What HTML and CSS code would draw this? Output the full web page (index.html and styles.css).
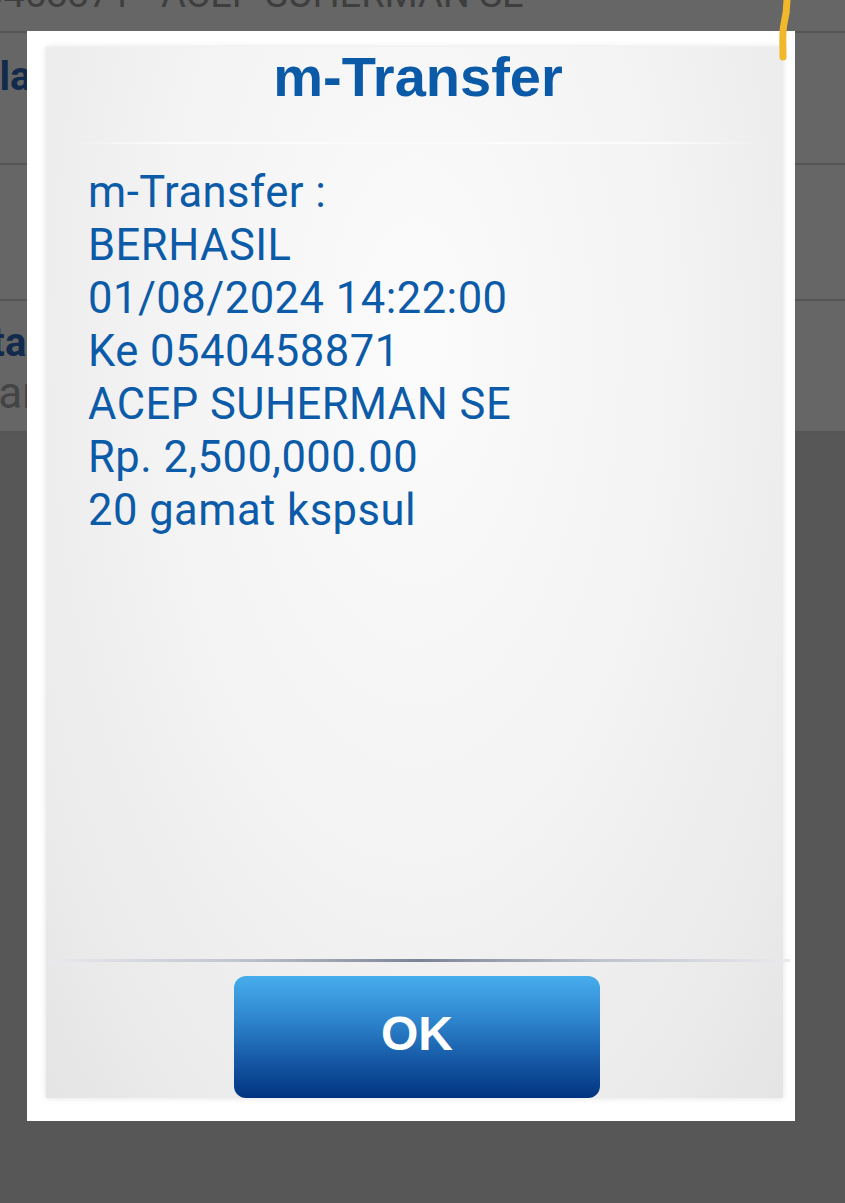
FILE: index.html
```html
<!DOCTYPE html>
<html lang="en">
<head>
    <meta charset="UTF-8">
    <meta name="viewport" content="width=device-width, initial-scale=1.0">
    <title>m-Transfer</title>
    <link rel="stylesheet" href="styles.css">
</head>
<body>

    <main class="screen">
        <!-- Halaman di belakang dialog -->
        <section class="list">
            <div class="row row-top"><span class="muted">0540458871 - ACEP SUHERMAN SE</span></div>
            <div class="row row-name"><span class="label">Jumlah</span></div>
            <div class="row row-empty"></div>
            <div class="row row-note">
                <span class="label">Berita:</span>
                <span class="muted small">Pembayaran</span>
            </div>
        </section>

        <!-- Dialog hasil transfer -->
        <div class="dialog">
            <div class="panel">
                <h1 class="title">m-Transfer</h1>
                <div class="rule"></div>
                <div class="message">
                    <p>m-Transfer :</p>
                    <p>BERHASIL</p>
                    <p>01/08/2024 14:22:00</p>
                    <p>Ke 0540458871</p>
                    <p>ACEP SUHERMAN SE</p>
                    <p>Rp. 2,500,000.00</p>
                    <p>20 gamat kspsul</p>
                </div>
                <div class="divider"></div>
                <div class="actions">
                    <button class="ok">OK</button>
                </div>
            </div>
        </div>

        <svg class="scribble" width="30" height="70" viewBox="0 0 30 70">
            <path d="M17 -2 C17 10 16 16 14 24 C12 32 13 42 13 57" fill="none" stroke="#f1b82c" stroke-width="7" stroke-linecap="round"/>
        </svg>
    </main>

</body>
</html>
```

FILE: styles.css
```css
body {
    margin: 0;
    background-color: #575757;
    font-family: Roboto, "Noto Sans", sans-serif;
    overflow: hidden;
}

.screen {
    position: relative;
    width: 845px;
    height: 1203px;
}

/* daftar di belakang dialog */
.list {
    background-color: #666;
}

.row {
    box-sizing: border-box;
    border-bottom: 2px solid #555;
    overflow: hidden;
    white-space: nowrap;
}

.row-top {
    height: 33px;
}
.row-top .muted {
    display: block;
    font-size: 38px;
    line-height: 40px;
    margin-top: -26px;
    margin-left: -82px;
    color: #3e3e3e;
}

.row-name {
    height: 132px;
    padding-top: 20px;
}

.row-empty {
    height: 136px;
}

.row-note {
    height: 132px;
    padding-top: 18px;
}

.label {
    display: block;
    font-size: 40px;
    font-weight: bold;
    color: #122a4b;
}
.row-name .label {
    margin-left: -80px;
}
.row-note .label {
    margin-left: -81px;
}

.small {
    display: block;
    font-size: 44px;
    color: #444;
    margin-top: 1px;
    margin-left: -160px;
}

/* dialog */
.dialog {
    position: absolute;
    left: 27px;
    top: 31px;
    width: 768px;
    height: 1090px;
    box-sizing: border-box;
    padding: 16px 12px 23px 19px;
    background-color: #fff;
    display: flex;
}

.panel {
    flex: 1;
    display: flex;
    flex-direction: column;
    background: radial-gradient(ellipse at 50% 28%, #fbfbfb 0%, #f4f4f4 45%, #eaeaea 85%, #e4e4e4 100%);
    box-shadow: 0 0 6px rgba(0, 0, 0, 0.12);
}

.title {
    margin: 0;
    height: 95px;
    padding-left: 7px;
    text-align: center;
    font-family: "Liberation Sans", Arial, sans-serif;
    font-size: 56px;
    line-height: 60px;
    font-weight: bold;
    color: #0b5aa7;
}

.rule {
    height: 2px;
    margin: 0 22px 0 24px;
    background: linear-gradient(90deg, rgba(255,255,255,0), #fcfcfc 15%, #fcfcfc 85%, rgba(255,255,255,0));
}

.message {
    flex: 1;
    padding: 22px 0 0 42px;
    color: #0c5ba8;
    font-size: 43.5px;
    letter-spacing: 0.5px;
    line-height: 53px;
}
.message p {
    margin: 0;
}

.divider {
    height: 3px;
    margin-right: -7px;
    background: linear-gradient(90deg, #e9eaee 0%, #c2c6cf 25%, #7c8394 50%, #bfc3cc 75%, #e9eaee 100%);
}

.actions {
    display: flex;
    justify-content: center;
    padding: 14px 0 0 5px;
}

.ok {
    width: 366px;
    height: 122px;
    border: none;
    border-radius: 12px;
    background-image: linear-gradient(#46adec 0%, #2e86ce 35%, #1557a4 70%, #013480 100%);
    color: #fff;
    font-family: "Liberation Sans", Arial, sans-serif;
    font-size: 48px;
    font-weight: bold;
    padding: 0 0 8px 0;
}

.scribble {
    position: absolute;
    left: 770px;
    top: 0;
}
```
